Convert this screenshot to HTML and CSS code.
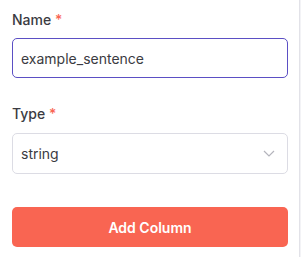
FILE: index.html
```html
<!DOCTYPE html>
<html lang="en">
<head>
  <meta charset="UTF-8" />
  <meta name="viewport" content="width=device-width, initial-scale=1.0"/>
  <title>Add Column</title>
  <link rel="stylesheet" href="styles.css">
</head>
<body>

  <!-- Side panel -->
  <div class="panel">
    <form class="column-form">
      <div class="field">
        <label class="field-label" for="colName">Name <span class="required">*</span></label>
        <input id="colName" class="text-input active" type="text" value="example_sentence" autofocus />
      </div>

      <div class="field">
        <label class="field-label" for="colType">Type <span class="required">*</span></label>
        <div class="select-wrap">
          <select id="colType" class="select-input">
            <option>string</option>
            <option>number</option>
            <option>boolean</option>
          </select>
          <svg class="chevron" width="12" height="7" viewBox="0 0 12 7">
            <path d="M1 1l5 5 5-5" fill="none" stroke="#b4b4bc" stroke-width="1.2"/>
          </svg>
        </div>
      </div>

      <button type="button" class="add-button">Add Column</button>
    </form>
  </div>

<script>
  const nameInput = document.getElementById("colName");
  nameInput.focus();
  nameInput.setSelectionRange(nameInput.value.length, nameInput.value.length);
</script>
</body>
</html>
```

FILE: styles.css
```css
body {
  font-family: Inter, "Noto Sans", sans-serif;
  background-color: #f3f3f6;
  color: #3b3b42;
  margin: 0;
}

.panel {
  width: 300px;
  height: 257px;
  box-sizing: border-box;
  background-color: white;
  border-right: 1px solid #e2e2e8;
  padding: 10px 10px 0 12px;
}

.field {
  margin-bottom: 26px;
}

.field-label {
  display: block;
  font-size: 14px;
  font-weight: 500;
  line-height: 20px;
  margin-bottom: 8px;
  color: #3b3b42;
}

.field + .field .field-label {
  margin-bottom: 9px;
}

.required {
  color: #f96552;
}

.text-input,
.select-input {
  display: block;
  width: 276px;
  box-sizing: border-box;
  padding: 0 8px;
  font-family: Inter, "Noto Sans", sans-serif;
  font-size: 14px;
  color: #3b3b42;
  background-color: white;
  border: 1px solid #dcdce4;
  border-radius: 5px;
  outline: none;
}

.text-input {
  height: 40px;
  caret-color: #222;
}

.text-input.active {
  border-color: #5b4fc4;
}

.select-wrap {
  position: relative;
}

.select-input {
  height: 41px;
  appearance: none;
  -webkit-appearance: none;
}

.chevron {
  position: absolute;
  right: 14px;
  top: 17px;
  pointer-events: none;
}

.add-button {
  display: block;
  width: 276px;
  height: 40px;
  margin-top: 33px;
  border: none;
  border-radius: 5px;
  background-color: #f96552;
  color: white;
  font-family: Inter, "Noto Sans", sans-serif;
  font-size: 14px;
  font-weight: 600;
  cursor: pointer;
}
```
